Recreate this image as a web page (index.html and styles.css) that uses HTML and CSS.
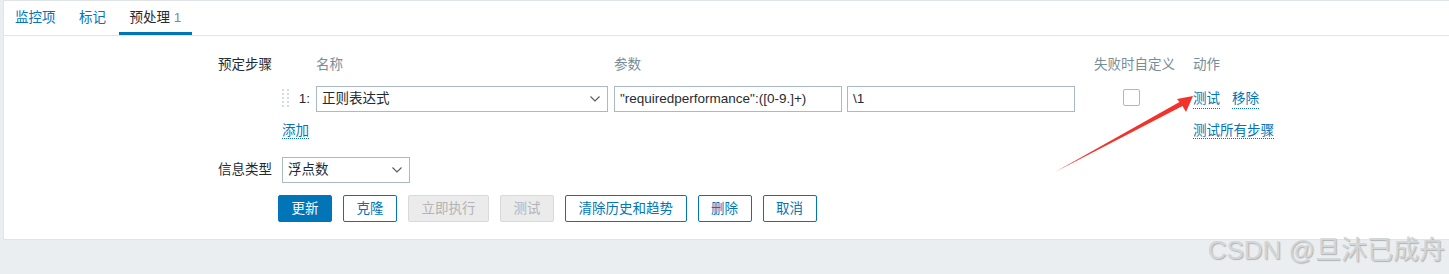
FILE: index.html
```html
<!DOCTYPE html>
<html lang="zh-CN">
<head>
    <meta charset="UTF-8">
    <title>预处理</title>
    <link rel="stylesheet" href="styles.css">
</head>
<body>
    <div class="page">
        <ul class="tabs">
            <li><a href="#">监控项</a></li>
            <li><a href="#">标记</a></li>
            <li class="active"><a href="#">预处理 <span class="tab-count">1</span></a></li>
        </ul>

        <div class="form">
            <div class="form-row">
                <div class="form-label">预定步骤</div>
                <div class="steps">
                    <div class="steps-row steps-head">
                        <div></div>
                        <div>名称</div>
                        <div>参数</div>
                        <div></div>
                        <div>失败时自定义</div>
                        <div>动作</div>
                    </div>

                    <div class="steps-row step">
                        <div class="step-num">
                            <svg class="drag-handle" width="8" height="22" viewBox="0 0 8 22">
                                <g fill="#d5dce0">
                                    <rect x="0" y="1" width="2" height="2"/><rect x="5" y="1" width="2" height="2"/>
                                    <rect x="0" y="5" width="2" height="2"/><rect x="5" y="5" width="2" height="2"/>
                                    <rect x="0" y="9" width="2" height="2"/><rect x="5" y="9" width="2" height="2"/>
                                    <rect x="0" y="13" width="2" height="2"/><rect x="5" y="13" width="2" height="2"/>
                                    <rect x="0" y="17" width="2" height="2"/><rect x="5" y="17" width="2" height="2"/>
                                </g>
                            </svg>
                            <span>1:</span>
                        </div>
                        <div class="select select-wide">
                            <span>正则表达式</span>
                            <svg width="10" height="6" viewBox="0 0 10 6"><polyline points="0.5,0.5 5,5 9.5,0.5" fill="none" stroke="#4f5b62" stroke-width="1.1"/></svg>
                        </div>
                        <div class="input">"requiredperformance":([0-9.]+)</div>
                        <div class="input">\1</div>
                        <div><span class="checkbox"></span></div>
                        <div class="actions-cell">
                            <a href="#" class="link">测试</a>
                            <a href="#" class="link">移除</a>
                        </div>
                    </div>

                    <div class="steps-row steps-foot">
                        <div class="foot-add"><a href="#" class="link">添加</a></div>
                        <div><a href="#" class="link">测试所有步骤</a></div>
                    </div>
                </div>
            </div>

            <div class="form-row form-row-type">
                <div class="form-label">信息类型</div>
                <div>
                    <div class="select select-small">
                        <span>浮点数</span>
                        <svg width="10" height="6" viewBox="0 0 10 6"><polyline points="0.5,0.5 5,5 9.5,0.5" fill="none" stroke="#4f5b62" stroke-width="1.1"/></svg>
                    </div>
                </div>
            </div>

            <div class="form-actions">
                <button class="btn btn-primary">更新</button>
                <button class="btn">克隆</button>
                <button class="btn" disabled>立即执行</button>
                <button class="btn" disabled>测试</button>
                <button class="btn">清除历史和趋势</button>
                <button class="btn">删除</button>
                <button class="btn">取消</button>
            </div>
        </div>
    </div>

    <svg class="arrow" width="1449" height="274" viewBox="0 0 1449 274">
        <polygon points="1055,172 1179.5,102 1177,99 1193,96 1186,112 1182.5,106 1055,172" fill="#f2332b"/>
    </svg>

    <div class="watermark">CSDN @旦沐已成舟</div>
</body>
</html>
```

FILE: styles.css
```css
:root {
    --blue: #0275b8;
    --text: #1f2c33;
    --muted: #768d99;
    --border: #dfe4e7;
    --field-border: #a9bac4;
    --bg: #ebeef0;
}

* {
    margin: 0;
    padding: 0;
    box-sizing: border-box;
}

body {
    background: var(--bg);
    color: var(--text);
    font-family: "Liberation Sans", "Noto Sans CJK SC", sans-serif;
    font-size: 13.5px;
    line-height: 18px;
    height: 274px;
    overflow: hidden;
}

a {
    text-decoration: none;
    color: var(--blue);
}

.page {
    margin-left: 3px;
    background: white;
    border: 1px solid var(--border);
    border-right: none;
}

/* Tabs */
.tabs {
    display: flex;
    gap: 1.5px;
    list-style: none;
    height: 35px;
    border-bottom: 1px solid var(--border);
}

.tabs a {
    display: block;
    height: 34px;
    line-height: 34px;
    padding: 0 11px;
}

.tabs .active a {
    color: var(--text);
    box-shadow: inset 0 -3px 0 var(--blue);
}

.tab-count {
    color: var(--muted);
}

/* Form */
.form {
    padding: 20px 0 17px;
}

.form-row {
    display: grid;
    grid-template-columns: 268px 1fr;
    column-gap: 10px;
}

.form-label {
    text-align: right;
}

.form-row-type {
    margin-top: 17px;
}

.form-row-type .form-label {
    line-height: 26px;
}

/* Preprocessing steps */
.steps-row {
    display: grid;
    grid-template-columns: 34px 298px 233px 247px 99px auto;
    align-items: center;
}

.steps-head {
    color: var(--muted);
    margin-bottom: 12px;
}

.step {
    height: 26px;
}

.step-num {
    display: flex;
    align-items: center;
    justify-content: space-between;
    padding-right: 6px;
}

.select,
.input {
    height: 26px;
    border: 1px solid var(--field-border);
    padding: 0 5px;
    line-height: 24px;
    white-space: nowrap;
    overflow: hidden;
}

.select {
    display: flex;
    align-items: center;
    justify-content: space-between;
    padding-right: 7px;
}

.select-wide {
    width: 292px;
}

.select-small {
    width: 128px;
}

.input {
    width: 228px;
}

.checkbox {
    display: block;
    width: 17px;
    height: 17px;
    margin: 0 0 3px 29px;
    border: 1px solid var(--field-border);
    border-radius: 2px;
}

.actions-cell {
    display: flex;
    gap: 12px;
}

.link {
    border-bottom: 1px dotted var(--blue);
}

.steps-foot {
    margin-top: 10px;
}

.foot-add {
    grid-column: 1 / 6;
}

/* Buttons */
.form-actions {
    display: flex;
    gap: 11px;
    padding-left: 274px;
    margin-top: 12px;
}

.btn {
    height: 27px;
    padding: 0 12.5px;
    border: 1px solid var(--blue);
    border-radius: 2px;
    background: white;
    color: var(--blue);
    font: inherit;
    line-height: 25px;
    cursor: pointer;
}

.btn-primary {
    background: var(--blue);
    color: white;
}

.btn:disabled {
    background: #ebebeb;
    border-color: #d9d9d9;
    color: #b3b3b3;
    cursor: default;
}

/* Overlays from the screenshot */
.arrow {
    position: absolute;
    left: 0;
    top: 0;
    pointer-events: none;
}

.watermark {
    position: absolute;
    top: 235px;
    right: 4px;
    font-size: 26px;
    line-height: 30px;
    color: #d3d6d8;
    text-shadow: 1px 1px 1px rgba(0, 0, 0, 0.25);
}
```
